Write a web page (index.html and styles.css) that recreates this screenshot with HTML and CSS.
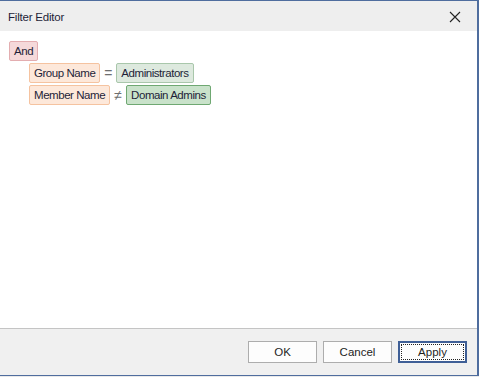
FILE: index.html
```html
<!DOCTYPE html>
<html>
  <head>
    <title>Filter Editor</title>
    <link rel="stylesheet" href="styles.css">
  </head>
  <body>
    <div class="window">
      <!-- 标题栏 -->
      <div class="titlebar">
        <span class="title">Filter Editor</span>
        <span class="close">
          <svg width="12" height="12" viewBox="0 0 12 12">
            <path d="M1 1 L11 11 M11 1 L1 11" stroke="#222" stroke-width="1.1" fill="none" />
          </svg>
        </span>
      </div>

      <!-- 过滤条件 -->
      <div class="content">
        <div class="row">
          <span class="chip group">And</span>
        </div>
        <div class="row child">
          <span class="chip field">Group Name</span>
          <span class="op">=</span>
          <span class="chip value">Administrators</span>
        </div>
        <div class="row child">
          <span class="chip field">Member Name</span>
          <span class="op">≠</span>
          <span class="chip value selected">Domain Admins</span>
        </div>
      </div>

      <div class="footer">
        <button>OK</button>
        <button>Cancel</button>
        <button class="default"><span>Apply</span></button>
      </div>
    </div>
  </body>
</html>
```

FILE: styles.css
```css
body {
  margin: 0;
  background: #e9e9e9;
  font-family: "Liberation Sans", Arial, sans-serif;
  font-size: 11px;
  color: #1e1e38;
}
* {
  box-sizing: border-box;
}
.window {
  width: 479px;
  height: 376px;
  border-top: 1px solid #4f6d9e;
  border-right: 2px solid #4f6d9e;
  border-bottom: 1px solid #4f6d9e;
  display: flex;
  flex-direction: column;
}
.titlebar {
  height: 30px;
  background: #eeeeee;
  display: flex;
  align-items: center;
  justify-content: space-between;
  padding: 0 16px 0 8px;
}
.title {
  font-size: 11.5px;
  letter-spacing: -0.2px;
  padding-top: 1px;
}
.close {
  display: flex;
  padding-top: 1px;
}
.content {
  height: 297px;
  background: white;
  padding: 10px 9px;
  display: flex;
  flex-direction: column;
  gap: 2px;
}
.row {
  display: flex;
  align-items: center;
  height: 20px;
}
.row.child {
  padding-left: 20px;
}
.chip {
  height: 20px;
  line-height: 18px;
  padding: 0 4px;
  border: 1px solid;
  border-radius: 2px;
  white-space: nowrap;
  font-size: 11.5px;
  letter-spacing: -0.45px;
}
.chip.group {
  background: #f5d9da;
  border-color: #e3adb0;
}
.chip.field {
  background: #fde8da;
  border-color: #f5c3a0;
}
.chip.value {
  background: #dde9de;
  border-color: #a9c7ab;
}
.chip.value.selected {
  background: #c9e2ca;
  border-color: #6fa872;
}
.op {
  color: #6e6e6e;
  font-size: 14px;
  width: 16px;
  text-align: center;
}
.footer {
  flex: 1;
  background: #f0f0f0;
  border-top: 1px solid #c4c4c4;
  display: flex;
  justify-content: flex-end;
  align-items: flex-start;
  gap: 6px;
  padding: 12px 10px 0 0;
}
button {
  width: 69px;
  height: 22px;
  background: #fdfdfd;
  border: 1px solid #adadad;
  font-family: "Liberation Sans", Arial, sans-serif;
  font-size: 11.5px;
  color: #1e1e1e;
  padding: 0;
}
button.default {
  border: 2px solid #3f5f96;
  padding: 1px;
}
button.default span {
  display: flex;
  align-items: center;
  justify-content: center;
  height: 100%;
  border: 1px dotted #222;
}
```
